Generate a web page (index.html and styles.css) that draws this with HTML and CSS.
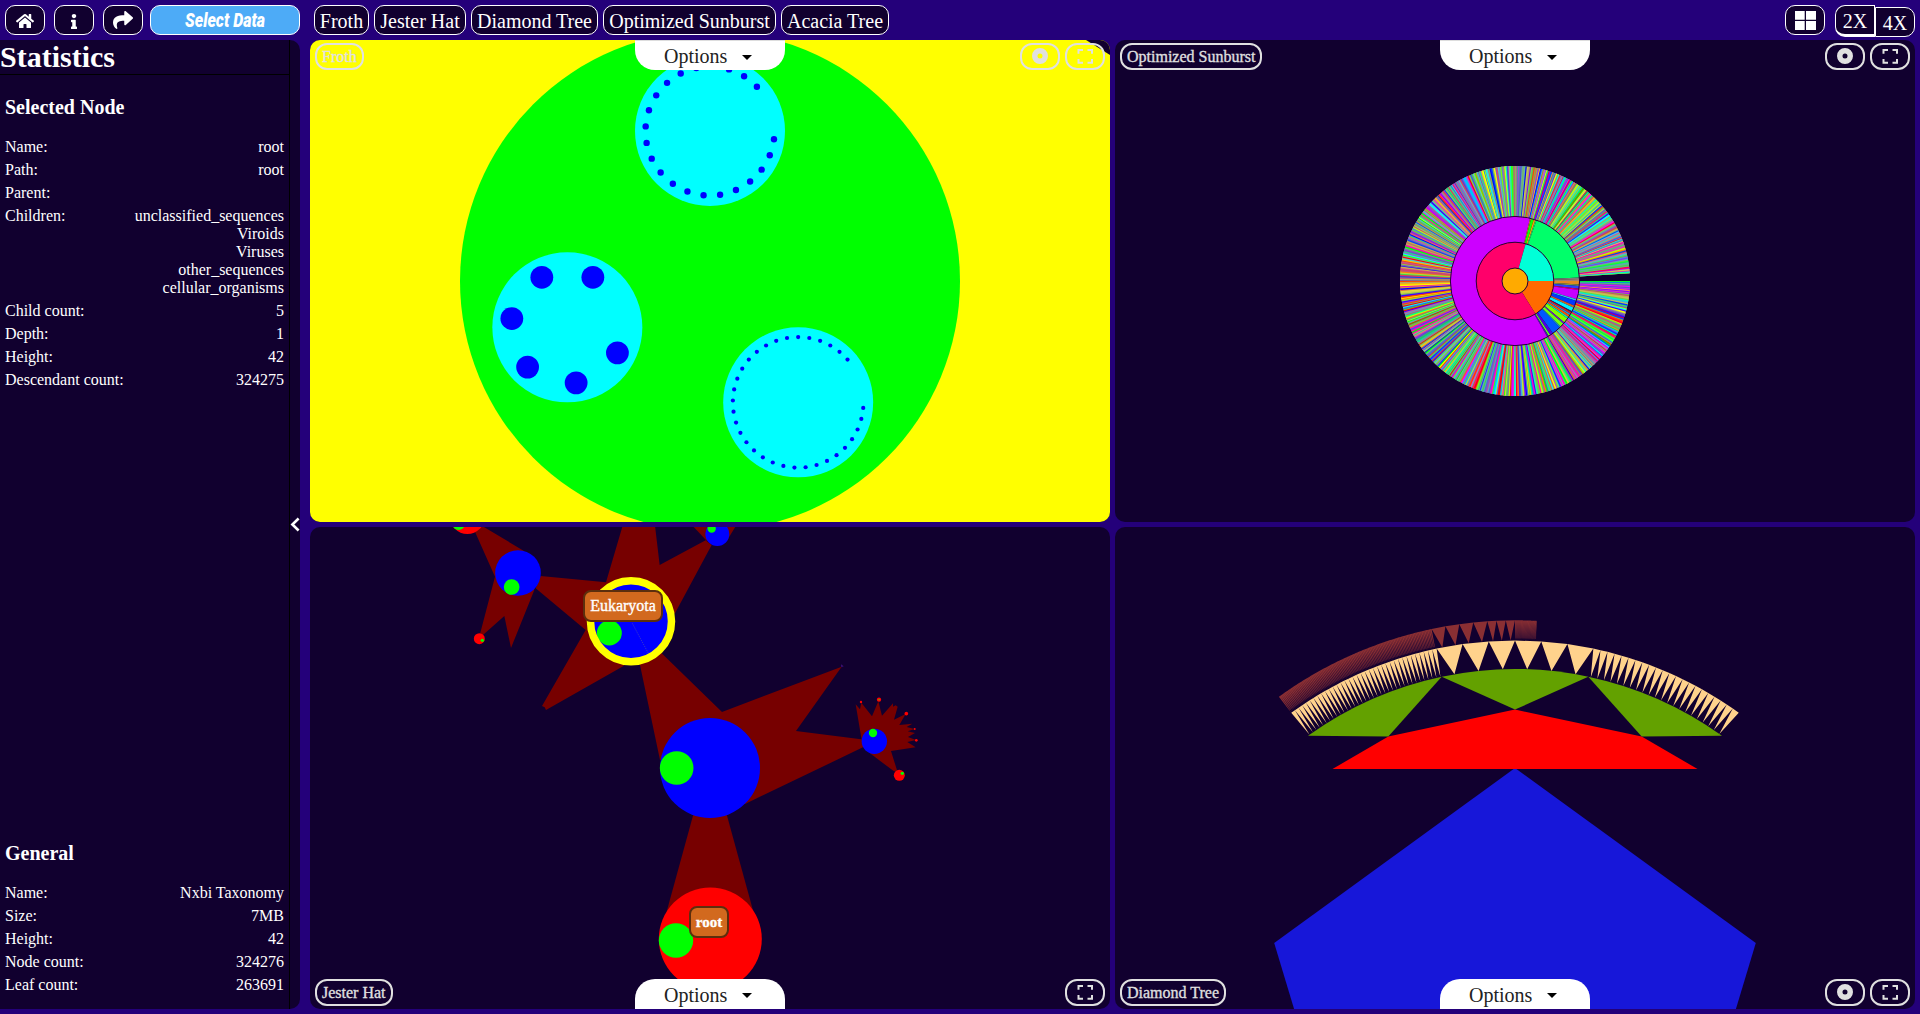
FILE: index.html
```html
<!DOCTYPE html>
<html lang="en">
<head>
<meta charset="utf-8">
<title>Tree Visualizer</title>
<link rel="stylesheet" href="styles.css">
</head>
<body>
<header class="topbar">
  <div class="tools">
    <button class="btn icon-btn"><svg width="18" height="14" viewBox="0 32 576 448" preserveAspectRatio="none"><path fill="#fff" d="M280.37 148.26L96 300.11V464a16 16 0 0 0 16 16l112.06-.29a16 16 0 0 0 15.92-16V368a16 16 0 0 1 16-16h64a16 16 0 0 1 16 16v95.64a16 16 0 0 0 16 16.05L464 480a16 16 0 0 0 16-16V300L295.67 148.26a12.19 12.19 0 0 0-15.3 0zM571.6 251.47L488 182.56V44.05a12 12 0 0 0-12-12h-56a12 12 0 0 0-12 12v72.61L318.47 43a48 48 0 0 0-61 0L4.34 251.47a12 12 0 0 0-1.6 16.9l25.5 31A12 12 0 0 0 45.15 301l235.22-193.74a12.19 12.19 0 0 1 15.3 0L530.9 301a12 12 0 0 0 16.9-1.6l25.5-31a12 12 0 0 0-1.7-16.93z"/></svg></button>
    <button class="btn icon-btn"><svg width="6" height="15" viewBox="0 0 192 512" preserveAspectRatio="none"><path fill="#fff" d="M20 424.229h20V279.771H20c-11.046 0-20-8.954-20-20V212c0-11.046 8.954-20 20-20h112c11.046 0 20 8.954 20 20v212.229h20c11.046 0 20 8.954 20 20V492c0 11.046-8.954 20-20 20H20c-11.046 0-20-8.954-20-20v-47.771c0-11.046 8.954-20 20-20zM96 0C56.235 0 24 32.235 24 72s32.235 72 72 72 72-32.235 72-72S135.764 0 96 0z"/></svg></button>
    <button class="btn icon-btn share"><svg width="20" height="18" viewBox="0 32 512 448" preserveAspectRatio="none"><path fill="#fff" d="M503.691 189.836L327.687 37.851C312.281 24.546 288 35.347 288 56.015v80.053C127.371 137.907 0 170.1 0 322.326c0 61.441 39.581 122.309 83.333 154.132 13.653 9.931 33.111-2.533 28.077-18.631C66.066 312.814 132.917 274.316 288 272.085V360c0 20.7 24.3 31.453 39.687 18.164l176.004-152c11.071-9.562 11.086-26.753 0-36.328z"/></svg></button>
  </div>
  <button class="btn select-data"><svg width="100" height="28"><text x="10" y="21" textLength="80" lengthAdjust="spacingAndGlyphs">Select Data</text></svg></button>
  <nav class="views">
    <button class="btn w-froth">Froth</button>
    <button class="btn w-jester">Jester Hat</button>
    <button class="btn w-diamond">Diamond Tree</button>
    <button class="btn w-sunburst">Optimized Sunburst</button>
    <button class="btn w-acacia">Acacia Tree</button>
  </nav>
  <div class="layout-tools">
    <button class="btn icon-btn"><svg class="grid-icon" width="21" height="19" viewBox="0 0 21 19"><path fill="#fff" d="M0 0h9.7v8.7H0zM11 0h10v8.7H11zM0 10h9.7v9H0zM11 10h10v9H11z"/></svg></button>
    <div class="scale">
      <button class="btn scale-2">2X</button><button class="btn scale-4">4X</button>
    </div>
  </div>
</header>

<main class="workspace">
  <aside class="sidebar">
    <div class="stats">
      <h1>Statistics</h1>
      <section>
        <h2>Selected Node</h2>
        <dl>
          <div><dt>Name:</dt><dd>root</dd></div>
          <div><dt>Path:</dt><dd>root</dd></div>
          <div><dt>Parent:</dt><dd></dd></div>
          <div><dt>Children:</dt><dd>unclassified_sequences<br>Viroids<br>Viruses<br>other_sequences<br>cellular_organisms</dd></div>
          <div><dt>Child count:</dt><dd>5</dd></div>
          <div><dt>Depth:</dt><dd>1</dd></div>
          <div><dt>Height:</dt><dd>42</dd></div>
          <div><dt>Descendant count:</dt><dd>324275</dd></div>
        </dl>
      </section>
      <section class="general">
        <h2>General</h2>
        <dl>
          <div><dt>Name:</dt><dd>Nxbi Taxonomy</dd></div>
          <div><dt>Size:</dt><dd>7MB</dd></div>
          <div><dt>Height:</dt><dd>42</dd></div>
          <div><dt>Node count:</dt><dd>324276</dd></div>
          <div><dt>Leaf count:</dt><dd>263691</dd></div>
        </dl>
      </section>
    </div>
    <div class="collapse"><svg width="10" height="15" viewBox="0 0 10 15"><path d="M8.6 1.5L2.4 7.5l6.2 6" fill="none" stroke="#fff" stroke-width="2.6"/></svg></div>
  </aside>

  <div class="panels">
    <article class="panel top">
      <svg class="canvas" id="froth" viewBox="310 40 800 482">
        <rect x="310" y="40" width="800" height="482" fill="#ff0"/>
        <path d="M1086 40L1110 55V40z" fill="#11002f"/>
        <circle cx="710" cy="281" r="250" fill="#0f0"/>
      </svg>
      <div class="bar"><span class="tag">Froth</span><span class="actions"><button class="round"><svg class="disc" width="16" height="16"><use href="#i-disc"/></svg></button><button class="round"><svg width="16" height="16"><use href="#i-full"/></svg></button></span></div>
      <div class="options">Options<i></i></div>
    </article>

    <article class="panel top">
      <svg class="canvas" id="sunburst" viewBox="1115 40 800 482"></svg>
      <div class="bar"><span class="tag">Optimized Sunburst</span><span class="actions"><button class="round"><svg width="16" height="16"><use href="#i-disc"/></svg></button><button class="round"><svg width="16" height="16"><use href="#i-full"/></svg></button></span></div>
      <div class="options">Options<i></i></div>
    </article>

    <article class="panel bottom">
      <svg class="canvas" viewBox="310 527 800 482">
        <path d="M694 812H726L754 914H666z" fill="#700"/>
        <g transform="translate(440 510) scale(.33333)">
          <g fill="#700">
            <path d="M600 465L573 333L665 430L846 606L1205 470L1068 663L1275 689V709L915 882L810 774L660 750z"/>
            <path d="M287 235L302 198L498 217L553 30H643L659 165L797 91L815 105L705 310L573 333L552 467L318 600L314 592L306 588L437 360z"/>
            <path d="M95 43L115 41L252 123L283 240L213 414L193 318L128 376L120 372L165 200z"/>
            <path d="M745 34H896L862 90L800 92z"/>
            <path d="M1265 690L1247 583L1260 598L1264 578L1296 619L1315 574L1326 617L1359 580V590L1367 586L1373 590L1362 629L1397 612L1378 645L1417 641L1400 651L1424 657L1403 664L1425 669L1404 681L1428 690L1402 696L1427 712L1353 723L1372 784L1362 784L1290 730z"/>
          </g>
          <g fill="#00f">
            <circle cx="810" cy="774" r="150"/><circle cx="573" cy="333" r="120"/>
            <circle cx="234" cy="189" r="68.500"/><circle cx="832" cy="72" r="36"/><circle cx="1303" cy="694" r="38"/>
          </g>
          <g fill="red">
            <circle cx="82" cy="19" r="53"/><circle cx="118" cy="386" r="16.500"/><circle cx="1378" cy="796" r="16.500"/>
            <circle cx="1263" cy="576" r="3.500"/><circle cx="1317" cy="569" r="6.500"/><circle cx="1399" cy="611" r="5.500"/><circle cx="1424" cy="657" r="3"/><circle cx="1429" cy="691" r="4"/>
          </g>
          <g fill="#0f0">
            <circle cx="710" cy="774" r="50.500"/><circle cx="508" cy="369" r="37.500"/><circle cx="215" cy="231" r="23.500"/>
            <circle cx="815" cy="56" r="12.500"/><circle cx="1299" cy="669" r="12.500"/><circle cx="56" cy="42" r="18"/>
            <circle cx="127" cy="391" r="5"/><circle cx="1387" cy="790" r="5"/><circle cx="1317" cy="569" r="2"/>
          </g>
          <path d="M1203 463L1211 469L1204 472z" fill="#40107a"/>
          <path d="M577 340L625 430" stroke="#4a4ab8" stroke-width="2" stroke-dasharray="4 3"/>
          <circle cx="573" cy="333.500" r="121.500" fill="none" stroke="#ff0" stroke-width="22.500"/>
        </g>
        <circle cx="710.300" cy="939" r="51.500" fill="red"/><circle cx="676" cy="940.500" r="17.200" fill="#0f0"/>
      </svg>
      <span class="node-label eukaryota">Eukaryota</span>
      <span class="node-label root">root</span>
      <div class="bar"><span class="tag">Jester Hat</span><span class="actions"><button class="round"><svg width="16" height="16"><use href="#i-full"/></svg></button></span></div>
      <div class="options">Options<i></i></div>
    </article>

    <article class="panel bottom">
      <svg class="canvas" viewBox="1115 527 800 482">
        <path d="M1515 768L1755.800 943L1732 1022H1298L1274.200 943z" fill="#1717d9"/>
        <path d="M1332.500 769L1388.300 736.400L1515 709.600L1641.700 736.400L1697.500 769z" fill="red"/>
        <g fill="#63a100">
          <path d="M1308 735.800A354 354 0 0 1 1441.700 676.700L1388.300 736.400z"/>
          <path d="M1441.700 676.700A354 354 0 0 1 1588.300 676.700L1515 709.600z"/>
          <path d="M1588.300 676.700A354 354 0 0 1 1722 735.800L1641.700 736.400z"/>
        </g>
        <path id="brown-fill" fill="none" stroke="#6b2436" stroke-opacity=".4" stroke-width="17"/>
        <path id="cream" fill="#ffd28c"/>
        <path id="brown" fill="#8a2f33"/>
      </svg>
      <div class="bar"><span class="tag">Diamond Tree</span><span class="actions"><button class="round"><svg width="16" height="16"><use href="#i-disc"/></svg></button><button class="round"><svg width="16" height="16"><use href="#i-full"/></svg></button></span></div>
      <div class="options">Options<i></i></div>
    </article>
  </div>
</main>

<svg class="symbols" width="0" height="0">
  <symbol id="i-disc" viewBox="0 0 16 16"><circle cx="8" cy="8" r="5.250" fill="none" stroke="#e0e0e0" stroke-width="5.500"/></symbol>
  <symbol id="i-full" viewBox="0 0 16 16"><path d="M1.500 5.800V2H6M10.500 2H15V5.800M15 11V14.800H10.500M6 14.800H1.500V11" fill="none" stroke="#e0e0e0" stroke-width="2"/></symbol>
</svg>
<script src="charts.js"></script>
</body>
</html>
```
FILE: styles.css
```css
* { box-sizing: border-box; }
body {
  margin: 0;
  width: 1920px;
  height: 1014px;
  overflow: hidden;
  background: #24007a;
  color: #fff;
  font-family: "Liberation Serif", serif;
  font-size: 16px;
  display: flex;
  flex-direction: column;
}
button { font: inherit; color: inherit; margin: 0; padding: 0; }
svg { display: block; }
.symbols { display: none; }

.topbar {
  flex: none;
  height: 40px;
  padding: 5px 5px 0;
  display: flex;
  align-items: flex-start;
}
.tools { display: flex; gap: 9px; }
.btn {
  height: 30px;
  border: 1px solid #fff;
  border-radius: 10px;
  background: #11002f;
  font-size: 20px;
  line-height: 28px;
  display: flex;
  justify-content: center;
  align-items: center;
  white-space: nowrap;
}
.icon-btn { width: 40px; padding-top: 2px; }
.icon-btn.share { padding: 0 0 1px; }
.grid-icon { margin-bottom: 2px; }
.select-data {
  width: 150px;
  margin-left: 7px;
  background: #4dabf7;
}
.select-data text {
  font: italic 900 20px Roboto, sans-serif;
  fill: #fff;
}
.views { display: flex; gap: 5px; margin-left: 14px; }
.views .btn, .scale .btn { padding-top: 1px; }
.w-froth { width: 55px; }
.w-jester { width: 92px; }
.w-diamond { width: 127px; }
.w-sunburst { width: 173px; }
.w-acacia { width: 108px; }
.layout-tools { margin-left: auto; display: flex; gap: 10px; }
.scale { display: flex; }
.scale .btn { width: 40px; }
.scale .scale-2 {
  height: 32px;
  border-bottom-width: 3px;
  border-radius: 10px 0 0 10px;
}
.scale .scale-4 {
  margin-top: 2px;
  border-radius: 0 10px 10px 0;
}

.workspace {
  flex: 1;
  min-height: 0;
  display: flex;
  gap: 10px;
  padding: 0 5px 5px 0;
}
.sidebar {
  width: 300px;
  display: flex;
  background: #11002f;
  border-radius: 0 10px 10px 0;
}
.stats {
  width: 290px;
  border-right: 1px solid #000;
  display: flex;
  flex-direction: column;
}
.stats h1 {
  margin: 0;
  height: 35px;
  border-bottom: 1px solid #000;
  font-size: 30px;
  line-height: 34px;
}
.stats section { padding: 20px 5px 0; }
.stats h2 { margin: 0 0 17px; font-size: 20px; line-height: 24px; }
.stats .general { margin-top: auto; padding-bottom: 12px; }
dl { margin: 0; line-height: 18px; }
dl div { display: flex; justify-content: space-between; padding: 2px 0 3px; }
dd { margin: 0; text-align: right; }
.collapse { display: flex; align-items: center; }

.panels {
  flex: 1;
  display: grid;
  grid-template-columns: 800px 800px;
  grid-template-rows: 482px 482px;
  gap: 5px;
}
.panel {
  position: relative;
  overflow: hidden;
  border-radius: 10px;
  background: #11002f;
}
.canvas { width: 800px; height: 482px; }
.bar {
  position: absolute;
  left: 5px;
  right: 5px;
  height: 27px;
  display: flex;
  justify-content: space-between;
}
.top .bar { top: 3px; }
.bottom .bar { bottom: 3px; }
.tag, .round {
  height: 27px;
  border: 2px solid #e0e0e0;
  border-radius: 12px;
  background: none;
  color: #e0e0e0;
}
.tag {
  padding: 0 5px;
  line-height: 24px;
  -webkit-text-stroke: .3px #e0e0e0;
}
.actions { display: flex; gap: 5px; }
.round {
  width: 40px;
  display: flex;
  align-items: center;
  justify-content: center;
  padding-bottom: 1px;
}
.options {
  position: absolute;
  left: 325px;
  width: 150px;
  height: 30px;
  background: #fff;
  color: #222;
  font-size: 20px;
  line-height: 32px;
  display: flex;
  align-items: center;
  padding: 1px 0 0 29px;
}
.top .options { top: 0; border-radius: 0 0 20px 20px; border-top: 1px solid #ddd; }
.bottom .options { bottom: 0; border-radius: 20px 20px 0 0; }
.options i {
  margin: 2px 0 0 15px;
  border: 5px solid transparent;
  border-top-color: #000;
  border-bottom: 0;
}
.node-label {
  position: absolute;
  height: 32px;
  border: 2px solid #5c2e0d;
  border-radius: 8px;
  background: #d2691e;
  line-height: 28px;
  text-align: center;
  -webkit-text-stroke: .35px #fff;
}
.eukaryota { left: 273px; top: 63px; width: 80px; }
.root { left: 379px; top: 379px; width: 40px; font-weight: bold; font-size: 15px; }
```
FILE: charts.js
```js
const NS = 'http://www.w3.org/2000/svg';
const rad = a => a * Math.PI / 180;

function add(parent, tag, attrs) {
  const el = document.createElementNS(NS, tag);
  for (const k in attrs) el.setAttribute(k, attrs[k]);
  parent.appendChild(el);
}

// Froth: bubbles placed on a ring, each holding its own ring of leaves.
const froth = document.getElementById('froth');
[
  { a: 270, n: 22, ring: 64.5, r: 3.2 },
  { a: 162, n: 6, ring: 56.2, r: 11.4 },
  { a: 54, n: 33, ring: 65.3, r: 2.1 }
].forEach(b => {
  const cx = 710 + 150 * Math.cos(rad(b.a));
  const cy = 281 + 150 * Math.sin(rad(b.a));
  add(froth, 'circle', { cx, cy, r: 75, fill: '#0ff' });
  for (let i = 0; i < b.n; i++) {
    const t = rad(324 * (i + 0.5) / b.n);
    add(froth, 'circle', { cx: cx + b.ring * Math.cos(t), cy: cy + b.ring * Math.sin(t), r: b.r, fill: '#00f' });
  }
});

// Sunburst: angles run clockwise from three o'clock.
const sun = document.getElementById('sunburst');
const CX = 1515, CY = 281;
function slice(r0, r1, a0, a1, fill) {
  const p = (r, a) => (CX + r * Math.cos(rad(a))).toFixed(2) + ' ' + (CY + r * Math.sin(rad(a))).toFixed(2);
  const big = a1 - a0 > 180 ? 1 : 0;
  add(sun, 'path', { fill, d: `M${p(r0, a0)}L${p(r1, a0)}A${r1} ${r1} 0 ${big} 1 ${p(r1, a1)}L${p(r0, a1)}A${r0} ${r0} 0 ${big} 0 ${p(r0, a0)}z` });
}
let seed = 4217;
const rnd = () => (seed = (seed * 16807) % 2147483647) / 2147483647;
let a = 0;
while (a < 356) {
  const w = Math.min(0.3 + rnd() * 0.5, 356.1 - a);
  const vivid = rnd() > 0.6;
  const h = Math.floor(rnd() * 24) * 15;
  // Each stripe runs under the next one so that no background shows between them.
  slice(64.5, 115, a, Math.min(a + w + 1, 356.1), vivid ? `hsl(${h} 100% 50%)` : `hsl(${h} ${35 + rnd() * 45}% 55%)`);
  a += w;
}
[
  [0, 3, '#e08a20'], [3, 4.5, '#7a9a40'], [4.5, 7, '#2a40ff'], [7, 8, '#e00060'], [8, 16.5, '#c800ff'], [16.5, 18, '#30c0e0'],
  [18, 22.5, '#0038ff'], [22.5, 24.500, '#d06020'], [24.5, 28, '#00f0ff'], [28, 29, '#302060'], [29, 30.5, '#e02020'],
  [30.5, 32, '#2090e0'], [32, 34, '#ff5500'], [34, 35.5, '#00e8c0'], [35.5, 40, '#80ff00'], [40, 41.5, '#7010d0'],
  [41.5, 45, '#70ff10'], [45, 46, '#20b0b0'], [46, 54, '#0058ff'], [54, 57, '#5000e0'], [57, 58.5, '#60ff20'], [58.5, 60, '#4020a0'],
  [60, 283.5, '#c0f'], [283.5, 284.5, '#d08020'], [284.5, 287, '#10ff00'], [287, 288.500, '#ffa000'], [288.5, 289.5, '#40d060'],
  [289.5, 356.8, '#00ff6a'], [356.8, 358.3, '#7a8078'], [358.3, 360, '#a08070']
].forEach(s => slice(38.8, 64.5, s[0], s[1], s[2]));
slice(13, 38.8, 0, 58, '#ff6a00');
slice(13, 38.8, 58, 286, '#ff006a');
slice(13, 38.8, 286, 360, '#00ffd8');
add(sun, 'circle', { cx: CX, cy: CY, r: 13, fill: '#ffaa00' });
[13, 38.8, 64.6].forEach(r => add(sun, 'circle', { cx: CX, cy: CY, r, fill: 'none', stroke: '#2a0038', 'stroke-width': 1 }));

// Diamond tree: triangles with bases on the outer arc and tips on the inner one.
function teeth(a0, a1, n, rIn, rOut) {
  const p = (r, t) => (1515 + r * Math.sin(rad(t))).toFixed(2) + ' ' + (1023 - r * Math.cos(rad(t))).toFixed(2);
  let d = '';
  const s = (a1 - a0) / n;
  for (let i = 0; i < n; i++) {
    const t = a0 + i * s;
    d += `M${p(rOut, t)}L${p(rOut, t + s)}L${p(rIn, t + s / 2)}z`;
  }
  return d;
}
document.getElementById('cream').setAttribute('d',
  teeth(-35.8, -11.82, 36, 354, 382.5) + teeth(-11.82, 11.82, 6, 354, 382.5) + teeth(11.82, 35.8, 22, 354, 382.5));
document.getElementById('brown').setAttribute('d',
  teeth(-35.9, -11.95, 110, 382.5, 402.7) + teeth(-11.95, -3.95, 4, 382.5, 402.7) +
  teeth(-3.95, 0, 3, 382.5, 402.7) + teeth(0, 3.1, 40, 382.5, 402.7));
document.getElementById('brown-fill').setAttribute('d', 'M1284.500 703.500A393 393 0 0 1 1433.500 638.500M1515 630A393 393 0 0 1 1536.500 630.500');
```
